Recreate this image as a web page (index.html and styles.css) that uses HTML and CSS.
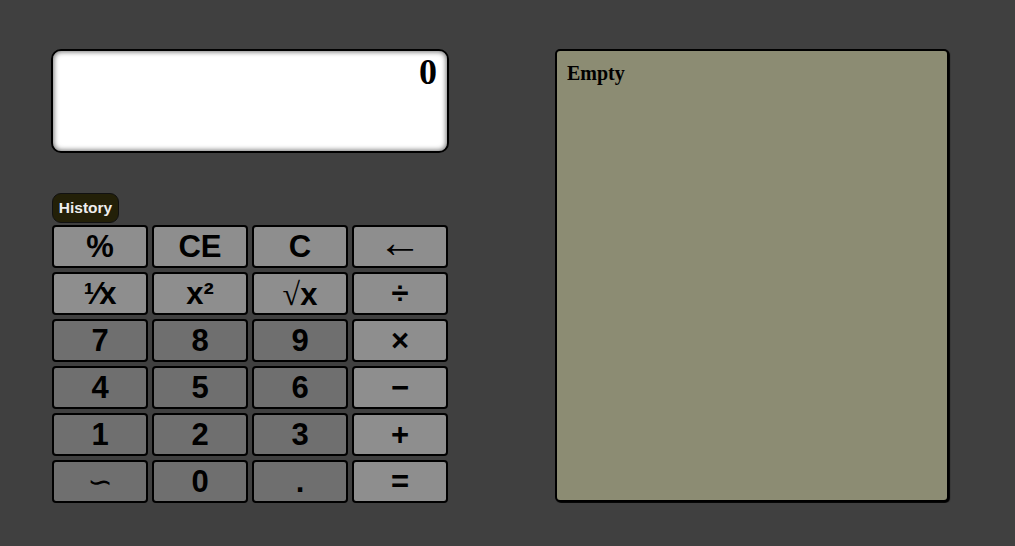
FILE: index.html
```html
<!DOCTYPE html>
<html>
<head>
<meta charset="utf-8">
<link rel="stylesheet" href="styles.css">
</head>
<body>
<div class="app">
  <div class="calc">
    <div class="display">0</div>
    <button class="history-btn">History</button>
    <div class="keypad">
      <button class="key fn">%</button>
      <button class="key fn">CE</button>
      <button class="key fn">C</button>
      <button class="key fn arrow">&#8592;</button>
      <button class="key fn">&#185;&#8260;x</button>
      <button class="key fn">x&#178;</button>
      <button class="key fn"><span class="root">&#8730;</span>x</button>
      <button class="key op">&#247;</button>
      <button class="key num">7</button>
      <button class="key num">8</button>
      <button class="key num">9</button>
      <button class="key op">&#215;</button>
      <button class="key num">4</button>
      <button class="key num">5</button>
      <button class="key num">6</button>
      <button class="key op">&#8722;</button>
      <button class="key num">1</button>
      <button class="key num">2</button>
      <button class="key num">3</button>
      <button class="key op">+</button>
      <button class="key num neg">&#8765;</button>
      <button class="key num">0</button>
      <button class="key num">.</button>
      <button class="key op">=</button>
    </div>
  </div>
  <div class="history-panel">Empty</div>
</div>
</body>
</html>
```
FILE: styles.css
```css
html, body {
  margin: 0;
  padding: 0;
  background: #404040;
}
.app {
  display: flex;
  align-items: flex-start;
  padding: 49px 0 0 51px;
  gap: 106px;
}
.calc {
  width: 398px;
  display: flex;
  flex-direction: column;
}
.display {
  box-sizing: border-box;
  height: 104px;
  background: #fff;
  border: 2px solid #000;
  border-radius: 10px;
  box-shadow: inset 0 0 5px 1px #777;
  text-align: right;
  padding: 0 10px;
  font-family: "Liberation Serif", serif;
  font-weight: bold;
  font-size: 36px;
  color: #000;
}
.history-btn {
  align-self: flex-start;
  margin: 40px 0 2px 1px;
  box-sizing: border-box;
  height: 30px;
  width: 67px;
  padding: 0;
  background: #232008;
  color: #eeeeee;
  border: 1px solid #111;
  border-radius: 9px;
  font-family: "Liberation Sans", Arial, sans-serif;
  font-weight: bold;
  font-size: 15.5px;
}
.keypad {
  margin-left: 1px;
  display: grid;
  grid-template-columns: repeat(4, 96px);
  grid-auto-rows: 43px;
  gap: 4px;
}
.key {
  box-sizing: border-box;
  margin: 0;
  padding: 0;
  border: 2px solid #000;
  border-radius: 4px;
  font-family: "Liberation Sans", Arial, sans-serif;
  font-weight: bold;
  font-size: 31px;
  color: #000;
  line-height: 1;
}
.fn, .op { background: #8e8e8e; }
.num { background: #6f6f6f; }
.arrow { font-weight: normal; font-size: 44px; line-height: 20px; padding-bottom: 9px; }
.root { font-weight: normal; font-family: "Liberation Serif", serif; font-size: 32px; }
.neg { font-weight: normal; font-family: "DejaVu Sans", sans-serif; font-size: 30px; }
.history-panel {
  box-sizing: border-box;
  width: 394px;
  height: 453px;
  background: #8c8c73;
  border: 2px solid #000;
  border-radius: 5px;
  box-shadow: 1px 1px 1px #000;
  padding: 11px 10px;
  font-family: "Liberation Serif", serif;
  font-weight: bold;
  font-size: 20px;
  color: #000;
}
```
